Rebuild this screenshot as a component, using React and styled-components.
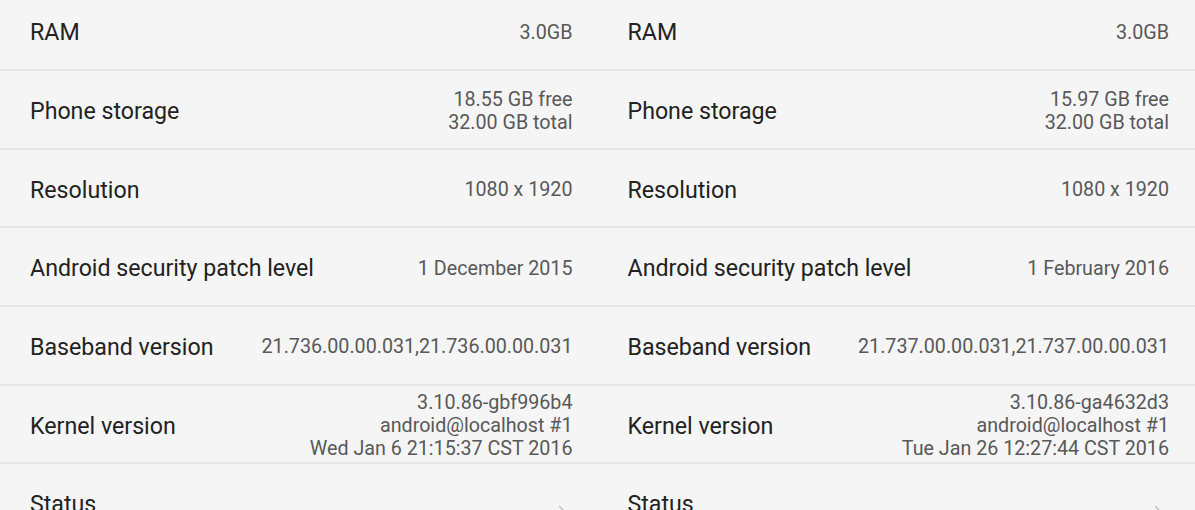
import styled, { createGlobalStyle } from 'styled-components'

const GlobalStyle = createGlobalStyle`
    html, body {
        margin: 0;
        padding: 0;
        background: #f5f5f5;
        overflow: hidden;
    }
`

const Page = styled.div`
    width: 1195px;
    height: 510px;
    overflow: hidden;
    display: grid;
    grid-template-columns: 1fr 1fr;
    background: #f5f5f5;
    font-family: Roboto, 'Noto Sans', sans-serif;
`

const Column = styled.div`
    display: flex;
    flex-direction: column;
    margin-top: -7.7px;
`

const Row = styled.div`
    box-sizing: border-box;
    height: 78.7px;
    flex-shrink: 0;
    display: flex;
    align-items: center;
    justify-content: space-between;
    padding: 3px ${(props) => (props.$right ? '26px' : '25px')} 0 30px;
    border-bottom: 2px solid #e6e6e6;
`

const Label = styled.div`
    font-size: 23.2px;
    color: #222;
    white-space: nowrap;
`

const Value = styled.div`
    font-size: 19.7px;
    line-height: 23px;
    color: #585858;
    text-align: right;
    white-space: nowrap;
`

const Chevron = styled.svg`
    width: 12px;
    height: 20px;
    margin-top: 20px;
    margin-right: 4px;
`

const phones = [
    {
        storage: ['18.55 GB free', '32.00 GB total'],
        patch: '1 December 2015',
        baseband: '21.736.00.00.031,21.736.00.00.031',
        kernel: ['3.10.86-gbf996b4', 'android@localhost #1', 'Wed Jan 6 21:15:37 CST 2016'],
    },
    {
        storage: ['15.97 GB free', '32.00 GB total'],
        patch: '1 February 2016',
        baseband: '21.737.00.00.031,21.737.00.00.031',
        kernel: ['3.10.86-ga4632d3', 'android@localhost #1', 'Tue Jan 26 12:27:44 CST 2016'],
    },
]

const Lines = ({ lines }) => lines.map((l) => <div key={l}>{l}</div>)

const PhoneColumn = ({ phone, right }) => (
    <Column>
        <Row $right={right}>
            <Label>RAM</Label>
            <Value>3.0GB</Value>
        </Row>
        <Row $right={right}>
            <Label>Phone storage</Label>
            <Value>
                <Lines lines={phone.storage} />
            </Value>
        </Row>
        <Row $right={right}>
            <Label>Resolution</Label>
            <Value>1080 x 1920</Value>
        </Row>
        <Row $right={right}>
            <Label>Android security patch level</Label>
            <Value>{phone.patch}</Value>
        </Row>
        <Row $right={right}>
            <Label>Baseband version</Label>
            <Value>{phone.baseband}</Value>
        </Row>
        <Row $right={right}>
            <Label>Kernel version</Label>
            <Value>
                <Lines lines={phone.kernel} />
            </Value>
        </Row>
        <Row $right={right}>
            <Label>Status</Label>
            <Chevron viewBox="0 0 12 20">
                <path d="M2 2 L10 10 L2 18" fill="none" stroke="#c4c4c4" strokeWidth="1.5" />
            </Chevron>
        </Row>
    </Column>
)

export default function App() {
    return (
        <>
            <GlobalStyle />
            <Page>
                <PhoneColumn phone={phones[0]} />
                <PhoneColumn phone={phones[1]} right />
            </Page>
        </>
    )
}
